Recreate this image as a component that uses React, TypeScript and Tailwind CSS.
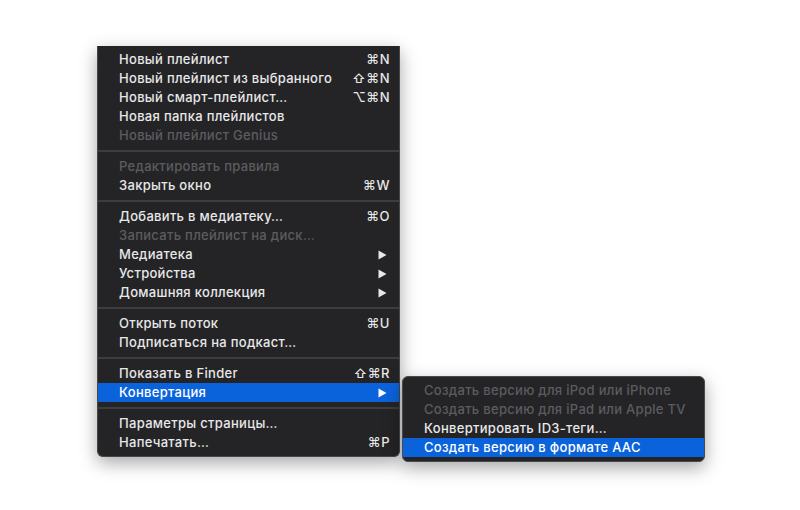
import React from "react";

type Item =
  | { kind: "item"; label: string; shortcut?: string; sub?: boolean; disabled?: boolean; active?: boolean }
  | { kind: "sep" };

const main: Item[] = [
  { kind: "item", label: "Новый плейлист", shortcut: "⌘N" },
  { kind: "item", label: "Новый плейлист из выбранного", shortcut: "⇧⌘N" },
  { kind: "item", label: "Новый смарт-плейлист…", shortcut: "⌥⌘N" },
  { kind: "item", label: "Новая папка плейлистов" },
  { kind: "item", label: "Новый плейлист Genius", disabled: true },
  { kind: "sep" },
  { kind: "item", label: "Редактировать правила", disabled: true },
  { kind: "item", label: "Закрыть окно", shortcut: "⌘W" },
  { kind: "sep" },
  { kind: "item", label: "Добавить в медиатеку…", shortcut: "⌘O" },
  { kind: "item", label: "Записать плейлист на диск…", disabled: true },
  { kind: "item", label: "Медиатека", sub: true },
  { kind: "item", label: "Устройства", sub: true },
  { kind: "item", label: "Домашняя коллекция", sub: true },
  { kind: "sep" },
  { kind: "item", label: "Открыть поток", shortcut: "⌘U" },
  { kind: "item", label: "Подписаться на подкаст…" },
  { kind: "sep" },
  { kind: "item", label: "Показать в Finder", shortcut: "⇧⌘R" },
  { kind: "item", label: "Конвертация", sub: true, active: true },
  { kind: "sep" },
  { kind: "item", label: "Параметры страницы…" },
  { kind: "item", label: "Напечатать…", shortcut: "⌘P" },
];

const subItems: Item[] = [
  { kind: "item", label: "Создать версию для iPod или iPhone", disabled: true },
  { kind: "item", label: "Создать версию для iPad или Apple TV", disabled: true },
  { kind: "item", label: "Конвертировать ID3-теги…" },
  { kind: "item", label: "Создать версию в формате AAC", active: true },
];

function Tri() {
  return (
    <svg width="9" height="10" viewBox="0 0 9 10" className="block">
      <path d="M0.5 0.5 L8.5 5 L0.5 9.5 Z" fill="currentColor" />
    </svg>
  );
}

function Row({ it }: { it: Item }) {
  if (it.kind === "sep") {
    return (
      <div className="h-[12px] flex items-center">
        <div className="h-[2px] w-full bg-[#3d3d40]" />
      </div>
    );
  }
  return (
    <div
      className={
        "h-[19px] flex items-center pl-[21px] pr-[9px] " +
        (it.active ? "bg-[#0b63dc] text-white " : "") +
        (it.disabled ? "text-[#5c5c60]" : it.active ? "" : "text-[#e8e8e8]")
      }
    >
      <span className="flex-1 whitespace-nowrap tracking-[0.3px]">{it.label}</span>
      {it.shortcut && (
        <span className="whitespace-nowrap tracking-[0.5px]" style={{ fontFamily: "Inter, 'DejaVu Sans', sans-serif" }}>
          {it.shortcut}
        </span>
      )}
      {it.sub && (
        <span className="pr-[3px]">
          <Tri />
        </span>
      )}
    </div>
  );
}

export default function App() {
  return (
    <div
      className="w-[800px] h-[510px] bg-white relative overflow-hidden text-[13px] font-medium"
      style={{ fontFamily: "Inter, 'Noto Sans', 'DejaVu Sans', sans-serif" }}
    >
      <div className="pt-[46px] pl-[97px]">
        <div className="relative w-[303px]">
          <div className="bg-[#242427] border-x border-b border-[#47474a] rounded-b-[6px] pt-[4px] pb-[4px] shadow-[0_6px_18px_rgba(0,0,0,0.35)]">
            {main.map((it, i) => (
              <Row key={i} it={it} />
            ))}
          </div>
          <div className="absolute left-[305px] top-[330px] w-[303px] bg-[#242427] border border-[#4a4a4d] rounded-[6px] pt-[4px] pb-[4px] shadow-[0_6px_18px_rgba(0,0,0,0.35)]">
            {subItems.map((it, i) => (
              <Row key={i} it={it} />
            ))}
          </div>
        </div>
      </div>
    </div>
  );
}
